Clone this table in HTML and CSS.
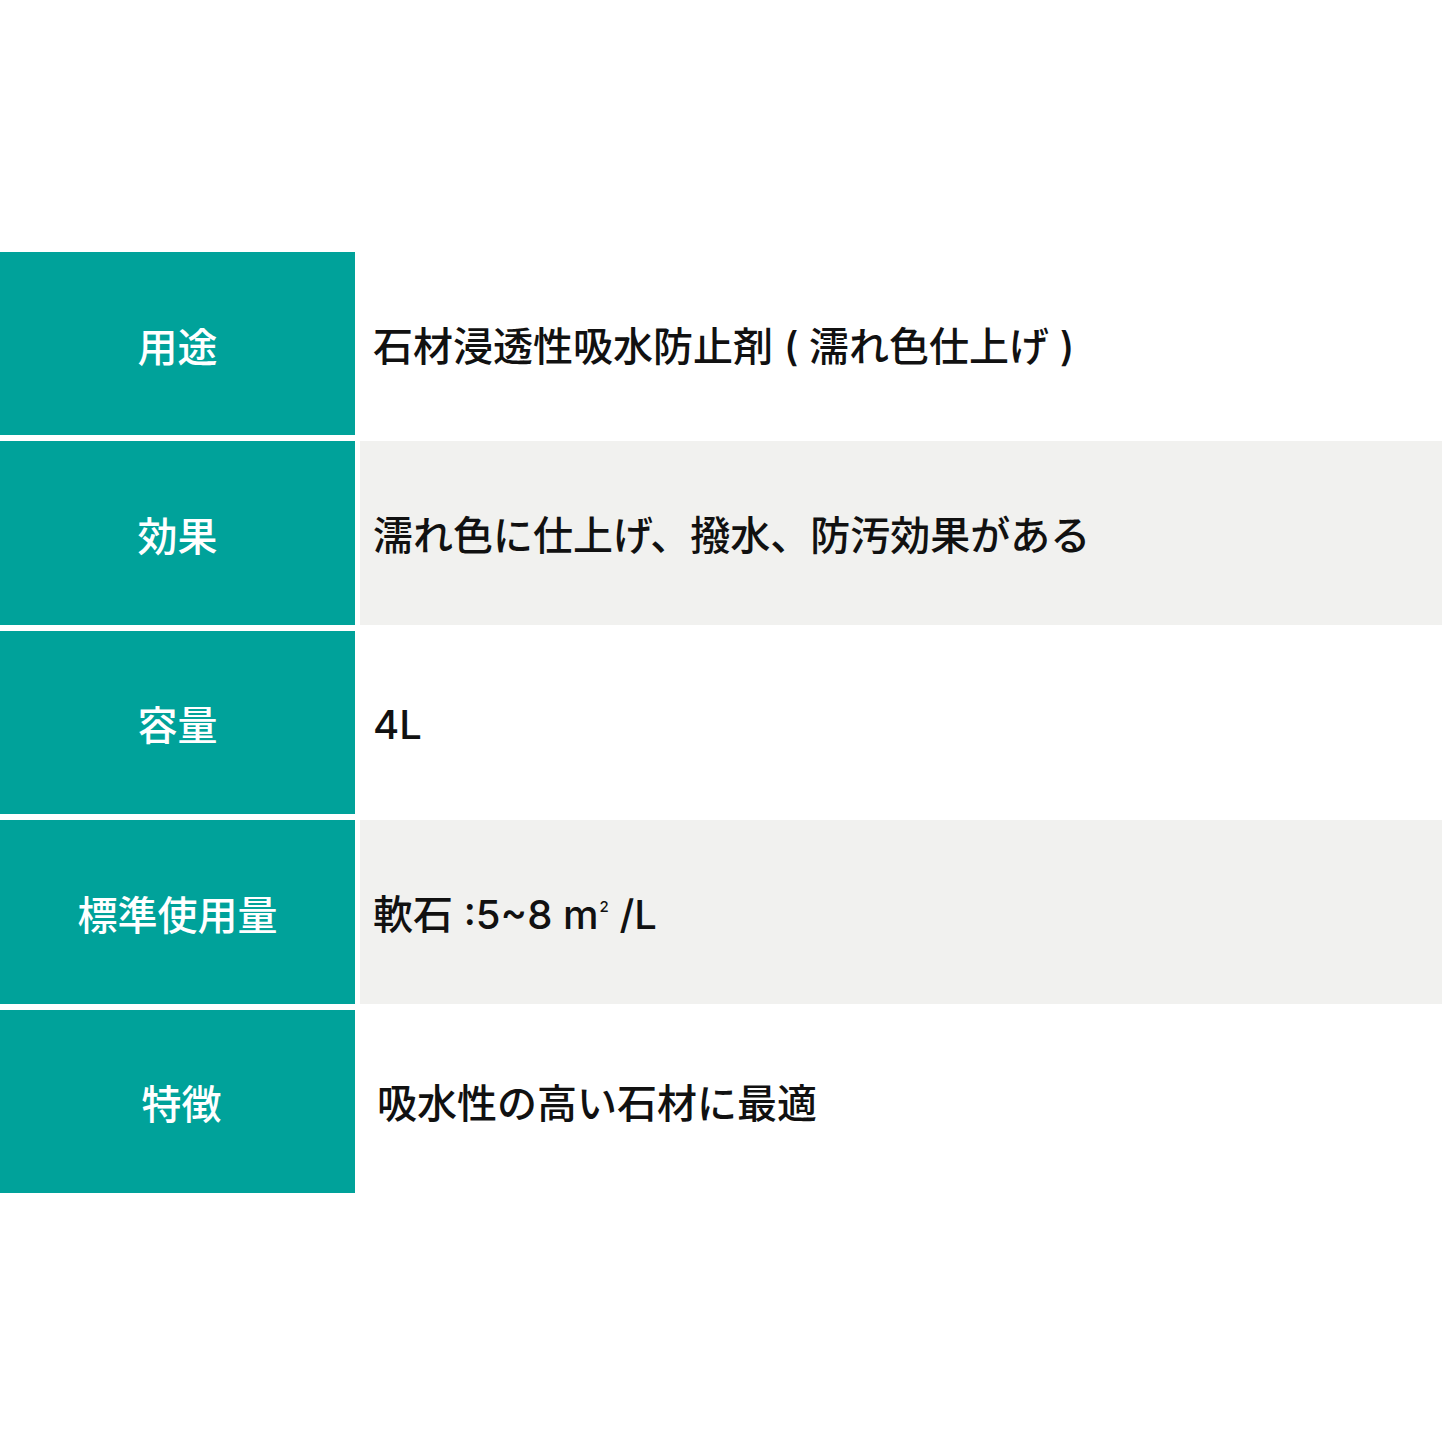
FILE: index.html
```html
<!DOCTYPE html>
<html lang="ja">
<head>
<meta charset="utf-8">
<title>仕様</title>
<link rel="stylesheet" href="styles.css">
</head>
<body>
<div class="page">
  <div class="spec">
    <div class="row">
      <div class="label">用途</div>
      <div class="value"><span>石材浸透性吸水防止剤 ( 濡れ色仕上げ )</span></div>
    </div>
    <div class="row alt">
      <div class="label">効果</div>
      <div class="value"><span>濡れ色に仕上げ、撥水、防汚効果がある</span></div>
    </div>
    <div class="row">
      <div class="label">容量</div>
      <div class="value"><span>4L</span></div>
    </div>
    <div class="row alt">
      <div class="label">標準使用量</div>
      <div class="value"><span>軟石 :5~8 m<sup class="sup">2</sup> /L</span></div>
    </div>
    <div class="row last">
      <div class="label">特徴</div>
      <div class="value"><span>吸水性の高い石材に最適</span></div>
    </div>
  </div>
</div>
</body>
</html>
```

FILE: styles.css
```css
html, body {
  margin: 0;
  padding: 0;
  background: #ffffff;
}

.page {
  width: 1445px;
  height: 1445px;
  padding-top: 252px;
  box-sizing: border-box;
  font-family: "Noto Sans CJK JP", "Noto Sans", sans-serif;
}

.spec {
  display: flex;
  flex-direction: column;
  gap: 6px;
  width: 1442px;
}

.row {
  display: grid;
  grid-template-columns: 355px 1fr;
  column-gap: 5px;
  height: 183.4px;
}

.label {
  background: #00a29a;
  color: #ffffff;
  font-size: 40px;
  font-weight: 500;
  display: flex;
  align-items: center;
  justify-content: center;
  line-height: 1;
  padding-top: 2px;
  box-sizing: border-box;
}

.value {
  display: flex;
  align-items: center;
  padding-left: 13px;
  padding-top: 6px;
  box-sizing: border-box;
  font-family: "Inter", "Noto Sans CJK JP", sans-serif;
  font-size: 40px;
  font-weight: 500;
  color: #111111;
  line-height: 1;
  white-space: pre;
}

.sup {
  font-size: 15px;
  line-height: 0;
  vertical-align: 17px;
  margin-left: 1px;
}

.row.alt .value {
  background: #f1f1ef;
}

.row.last .label {
  padding-left: 8px;
}

.row.last .value {
  padding-left: 17px;
}
```
